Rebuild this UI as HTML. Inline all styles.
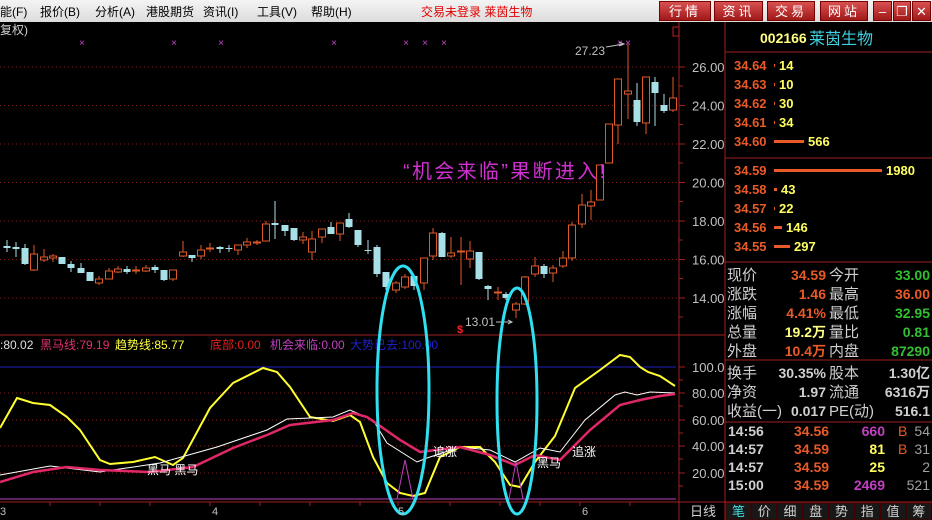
<!DOCTYPE html>
<html><head><meta charset="utf-8"><style>
*{margin:0;padding:0;box-sizing:border-box}
body{width:932px;height:520px;background:#000;overflow:hidden;position:relative;font-family:"Liberation Sans","Noto Sans CJK SC",sans-serif}
.top{position:absolute;left:0;top:0;width:932px;height:22px;background:linear-gradient(#f4f4f4,#dcdcdc);font-size:12px;color:#000}
.top span{position:absolute;top:3px;white-space:nowrap}
.btn{position:absolute;top:1px;height:20px;background:linear-gradient(#d85050,#a01818);color:#fff;font-size:13px;text-align:center;line-height:20px;border:1px solid #700;letter-spacing:3px}
</style></head><body>
<div class="top">
<span style="left:0">能(F)</span><span style="left:40px">报价(B)</span><span style="left:95px">分析(A)</span><span style="left:146px">港股期货</span><span style="left:203px">资讯(I)</span><span style="left:257px">工具(V)</span><span style="left:311px">帮助(H)</span>
<span style="left:421px;color:#e00000">交易未登录 莱茵生物</span>
<div class="btn" style="left:659px;width:52px">行情</div>
<div class="btn" style="left:714px;width:49px">资讯</div>
<div class="btn" style="left:767px;width:48px">交易</div>
<div class="btn" style="left:820px;width:48px">网站</div>
<div class="btn" style="left:873px;width:19px;letter-spacing:0">–</div>
<div class="btn" style="left:893px;width:18px;letter-spacing:0">❐</div>
<div class="btn" style="left:912px;width:19px;letter-spacing:0">✕</div>
</div>
<svg id="s" width="932" height="520" style="position:absolute;left:0;top:0" xmlns="http://www.w3.org/2000/svg" font-family="Liberation Sans, Noto Sans CJK SC, sans-serif"></svg>
<script>
var s=document.getElementById('s'),h='';
function L(x1,y1,x2,y2,c,w,d){h+='<line x1="'+x1+'" y1="'+y1+'" x2="'+x2+'" y2="'+y2+'" stroke="'+c+'" stroke-width="'+(w||1)+'"'+(d?' stroke-dasharray="'+d+'"':'')+'/>';}
function T(x,y,t,c,sz,a,b,tl){h+='<text x="'+x+'" y="'+y+'" fill="'+c+'" font-size="'+(sz||12)+'"'+(a?' text-anchor="'+a+'"':'')+(b?' font-weight="bold"':'')+(tl?' textLength="'+tl+'" lengthAdjust="spacing"':'')+'>'+t+'</text>';}
function P(pts,c,w){h+='<polyline fill="none" stroke="'+c+'" stroke-width="'+w+'" points="'+pts+'"/>';}
[67,105.5,144,182.5,221,259.5,298].forEach(function(y){L(0,y,678,y,'#802020',1,'1 3');});
L(679,22,679,520,'#a02020');L(725,22,725,520,'#a02020');
[['26.00',67],['24.00',105.5],['22.00',144],['20.00',182.5],['18.00',221],['16.00',259.5],['14.00',298]].forEach(function(a){T(692,a[1]+5,a[0],'#c0c0c0',13);L(679,a[1],685,a[1],'#a02020');L(679,a[1]+19,683,a[1]+19,'#a02020');});
h+='<rect x="673" y="27" width="6" height="9" fill="none" stroke="#c02020"/>';
T(0,34,'复权)','#d0d0d0',12);
[82,174,221,334,406,425,444,628,620].forEach(function(x){T(x,46,'×','#d040d0',10,'middle');});
var C=[[7,246,248,240,252,'c'],[16,247,249,242,257,'c'],[25,248,264,244,265,'c'],[34,254,270,245,271,'r'],[44,257,260,249,262,'r'],[53,256,258,254,262,'r'],[62,257,264,257,264,'c'],[71,264,268,261,272,'c'],[81,268,273,263,273,'c'],[90,272,281,272,281,'c'],[99,279,283,276,285,'r'],[109,271,279,268,279,'r'],[118,269,272,266,273,'r'],[127,269,272,266,274,'c'],[136,270,271,266,274,'r'],[146,268,271,265,272,'r'],[155,267,270,265,273,'c'],[164,270,280,270,281,'c'],[173,270,279,270,281,'r'],[183,252,256,241,257,'r'],[192,255,258,255,262,'c'],[201,250,256,245,259,'r'],[210,248,249,243,252,'r'],[220,247,249,246,253,'c'],[229,248,249,245,252,'c'],[238,245,250,245,255,'r'],[247,242,245,238,248,'r'],[257,242,243,240,245,'r'],[266,224,241,221,241,'r'],[275,223,225,201,239,'c'],[285,225,231,225,236,'c'],[294,228,240,228,241,'c'],[303,237,240,232,244,'r'],[312,239,252,231,260,'r'],[322,229,237,229,243,'r'],[331,227,234,222,234,'c'],[340,223,234,223,241,'r'],[349,219,227,213,228,'c'],[358,230,245,230,247,'c'],[368,250,251,240,254,'c'],[377,247,274,245,277,'c'],[386,272,287,272,290,'c'],[396,283,290,281,293,'r'],[405,277,287,274,289,'r'],[414,276,286,276,290,'c'],[424,258,283,258,290,'r'],[433,233,256,228,260,'r'],[442,233,257,232,257,'c'],[451,253,256,237,258,'r'],[461,251,252,237,285,'r'],[470,251,259,241,268,'r'],[479,252,279,252,280,'c'],[488,286,289,285,300,'c'],[498,292,293,287,300,'r'],[506,294,298,292,300,'c'],[516,304,310,302,318,'r'],[525,277,304,276,305,'r'],[535,266,274,257,277,'r'],[544,266,274,264,278,'c'],[553,268,273,265,282,'r'],[563,258,266,251,268,'r'],[572,225,258,222,261,'r'],[582,205,224,194,228,'r'],[591,202,206,190,220,'r'],[600,165,200,165,200,'r'],[609,124,163,124,163,'r'],[618,79,125,79,144,'r'],[628,91,94,44,119,'r'],[637,100,122,83,126,'c'],[646,77,123,77,134,'r'],[655,82,93,77,126,'c'],[664,105,111,94,113,'c'],[673,98,110,77,112,'r']];
C.forEach(function(k){var col=k[5]=='r'?'#e05a28':'#a8e0e8';L(k[0],k[3],k[0],k[4],col);var hh=Math.max(k[2]-k[1],1);
if(k[5]=='r')h+='<rect x="'+(k[0]-3.5)+'" y="'+k[1]+'" width="7" height="'+hh+'" fill="#000" stroke="'+col+'"/>';else h+='<rect x="'+(k[0]-3.5)+'" y="'+k[1]+'" width="7" height="'+hh+'" fill="'+col+'"/>';});
T(575,55,'27.23','#c0c0c0',12);L(606,47,624,44,'#c0c0c0');P('619,42 624,44 619,46','#c0c0c0',1);
T(465,326,'13.01','#c0c0c0',12);L(496,322,512,322,'#c0c0c0');P('508,320 512,322 508,324','#c0c0c0',1);
T(457,333,'$','#ff2020',11,'',1);
T(403,178,'“机会来临”果断进入!','#d030d0',20,'',0,202);
L(0,335,679,335,'#a02020');
T(0,349,':80.02','#e0e0e0',12);T(40,349,'黑马线:79.19','#e03070',12);T(115,349,'趋势线:85.77','#ffff40',12);T(210,349,'底部:0.00','#e02020',12);T(270,349,'机会来临:0.00','#c040c0',12);T(350,349,'大势已去:100.00','#2020d0',12);
L(0,367,676,367,'#2020c0');
[393,420,446,473].forEach(function(y){L(0,y,676,y,'#802020',1,'1 3');});
L(0,499,676,499,'#c040c0');
[['100.0',367],['80.00',393],['60.00',420],['40.00',446],['20.00',473]].forEach(function(a){T(692,a[1]+5,a[0],'#c0c0c0',13);L(679,a[1],685,a[1],'#a02020');L(679,a[1]+13,683,a[1]+13,'#a02020');});
L(679,335,725,335,'#a02020');L(0,502,932,502,'#a02020');
P('0,428 17,398 33,403 50,405 67,417 80,430 100,460 110,464 133,462 155,457 173,465 183,458 210,408 233,383 263,368 277,372 290,387 310,417 333,421 350,415 360,422 373,457 387,483 400,493 413,496 425,493 440,457 460,447 480,447 495,462 510,485 520,487 535,462 555,436 575,388 600,370 620,355 630,357 640,367 648,372 660,376 675,386','#ffff30',2);
P('0,475 50,466 100,472 160,463 217,447 267,430 287,419 333,417 350,410 373,420 387,443 417,462 427,458 460,447 490,450 515,462 540,448 560,452 585,420 615,395 625,392 637,395 650,392 675,393','#ffffff',1);
P('0,482 33,472 67,467 100,470 150,472 193,467 233,448 267,435 290,425 333,420 353,413 367,417 383,428 400,440 420,452 460,447 490,455 515,465 535,455 560,460 590,430 620,405 640,400 660,396 675,394','#e02868',2.5);
P('397,499 405,460 413,499','#c040c0',1);P('509,499 516,462 523,499','#c040c0',1);
h+='<ellipse cx="403" cy="390" rx="26" ry="124" fill="none" stroke="#30e0f0" stroke-width="3"/>';
h+='<ellipse cx="517" cy="401" rx="20" ry="113" fill="none" stroke="#30e0f0" stroke-width="3"/>';
T(147,474,'黑马 黑马','#ffffff',12);T(433,456,'追涨','#ffffff',12);T(537,467,'黑马','#ffffff',12);T(572,456,'追涨','#ffffff',12);
T(0,515,'3','#c0c0c0',11);T(212,515,'4','#c0c0c0',11);T(398,515,'5','#c0c0c0',11);T(582,515,'6','#c0c0c0',11);
[50,100,150,210,260,310,360,398,450,500,540,580,630].forEach(function(x){L(x,502,x,506,'#a02020');});
T(690,516,'日线','#d0d0d0',13);
L(725,52,932,52,'#a02020');L(725,158,932,158,'#a02020');L(725,262,932,262,'#a02020');L(725,360,932,360,'#a02020');L(725,422,932,422,'#a02020');
T(760,43,'002166','#ffff80',14,'',1);T(809,44,'莱茵生物','#40d0e0',16);
var ob=[['34.64','14',65,1],['34.63','10',84,1],['34.62','30',103,1],['34.61','34',122,1],['34.60','566',141,30],['34.59','1980',170,108],['34.58','43',189,3],['34.57','22',208,1],['34.56','146',227,8],['34.55','297',246,16]];
ob.forEach(function(o){T(734,o[2]+5,o[0],'#e85a28',13,'',1);h+='<rect x="774" y="'+(o[2]-1)+'" width="'+o[3]+'" height="3" fill="#e85a28"/>';T(776+o[3]+2,o[2]+5,o[1],'#ffff60',13,'',1);});
var inf=[['现价','34.59','#e85a28','今开','33.00','#30c030',274],['涨跌','1.46','#e85a28','最高','36.00','#e85a28',293],['涨幅','4.41%','#e85a28','最低','32.95','#30c030',312],['总量','19.2万','#ffff80','量比','0.81','#30c030',331],['外盘','10.4万','#e85a28','内盘','87290','#30c030',350],['换手','30.35%','#d0d0d0','股本','1.30亿','#d0d0d0',372],['净资','1.97','#d0d0d0','流通','6316万','#d0d0d0',391],['收益(一)','0.017','#d0d0d0','PE(动)','516.1','#d0d0d0',410]];
inf.forEach(function(r){T(727,r[6]+6,r[0],'#d0d0d0',15);T(826,r[6]+6,r[1],r[2],14,'end',1);T(829,r[6]+6,r[3],'#d0d0d0',15);T(930,r[6]+6,r[4],r[5],14,'end',1);});
var tr=[['14:56','34.56','660','#c040c0','B','54',431],['14:57','34.59','81','#ffff60','B','31',449],['14:57','34.59','25','#ffff60','','2',467],['15:00','34.59','2469','#c040c0','','521',485]];
tr.forEach(function(r){T(728,r[6]+5,r[0],'#d0d0d0',14,'',1);T(794,r[6]+5,r[1],'#e85a28',14,'',1);T(885,r[6]+5,r[2],r[3],14,'end',1);T(898,r[6]+5,r[4],'#e85a28',14);T(930,r[6]+5,r[5],'#a0a0a0',14,'end');});
['笔','价','细','盘','势','指','值','筹'].forEach(function(t,i){var x=726+i*25.75;h+='<rect x="'+x+'" y="503" width="25" height="17" fill="#181818" stroke="#400"/>';T(x+12.5,516,t,i==0?'#40e0e0':'#d0d0d0',13,'middle');});
s.innerHTML=h;
</script>
</body></html>
